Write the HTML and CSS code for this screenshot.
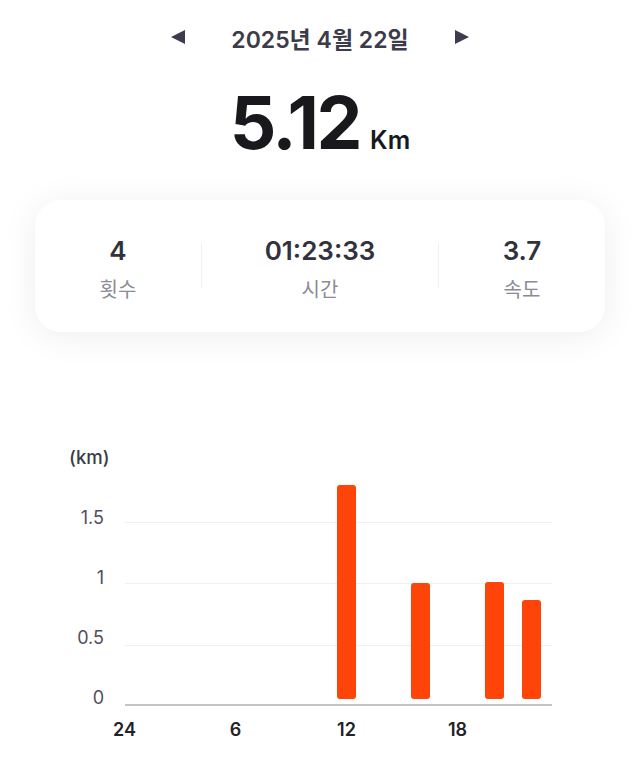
FILE: index.html
```html
<!DOCTYPE html>
<html lang="ko">
<head>
    <meta charset="UTF-8">
    <meta name="viewport" content="width=device-width, initial-scale=1.0">
    <title>걷기 기록</title>
    <link rel="stylesheet" href="styles.css">
</head>
<body>
    <!-- Date navigation -->
    <div class="date-nav">
        <span class="arrow arrow-left"></span>
        <span class="date">2025년 4월 22일</span>
        <span class="arrow arrow-right"></span>
    </div>

    <!-- Total distance -->
    <div class="total">
        <span class="total-value">5.12</span>
        <span class="total-unit">Km</span>
    </div>

    <!-- Summary card -->
    <div class="summary">
        <div class="stat">
            <div class="stat-value">4</div>
            <div class="stat-label">횟수</div>
        </div>
        <div class="divider"></div>
        <div class="stat">
            <div class="stat-value">01:23:33</div>
            <div class="stat-label">시간</div>
        </div>
        <div class="divider"></div>
        <div class="stat">
            <div class="stat-value">3.7</div>
            <div class="stat-label">속도</div>
        </div>
    </div>

    <!-- Hourly chart -->
    <div class="chart">
        <div class="chart-unit">(km)</div>
        <div class="chart-body">
            <div class="y-axis">
                <span>1.5</span>
                <span>1</span>
                <span>0.5</span>
                <span>0</span>
            </div>
            <div class="plot">
                <div class="bars">
                    <div class="bar" style="grid-column: 13; height: 214px"></div>
                    <div class="bar" style="grid-column: 17; height: 116px"></div>
                    <div class="bar" style="grid-column: 21; height: 117px"></div>
                    <div class="bar" style="grid-column: 23; height: 99px"></div>
                </div>
            </div>
        </div>
        <div class="x-axis">
            <span>24</span>
            <span>6</span>
            <span>12</span>
            <span>18</span>
        </div>
    </div>
</body>
</html>
```

FILE: styles.css
```css
body {
    margin: 0;
    background-color: #ffffff;
    font-family: Inter, "Noto Sans CJK KR", sans-serif;
    color: #33333d;
}

/* Date navigation */
.date-nav {
    display: flex;
    align-items: center;
    justify-content: center;
    margin-top: 22px;
    height: 32px;
}
.date {
    font-size: 23px;
    font-weight: 600;
    color: #3b3b4a;
    margin: 0 46px 0 46px;
}
.arrow {
    width: 0;
    height: 0;
    margin-top: -3px;
    border-top: 7.5px solid transparent;
    border-bottom: 7.5px solid transparent;
}
.arrow-left {
    border-right: 14px solid #3c3b52;
}
.arrow-right {
    border-left: 14px solid #3c3b52;
}

/* Total distance */
.total {
    display: flex;
    align-items: baseline;
    justify-content: center;
    margin-top: 32px;
    color: #18181d;
}
.total-value {
    font-size: 73px;
    font-weight: 700;
    line-height: 1;
    letter-spacing: -2.5px;
}
.total-unit {
    font-size: 25px;
    font-weight: 600;
    margin-left: 10px;
}

/* Summary card */
.summary {
    display: grid;
    grid-template-columns: 166px 1px 236px 1px 166px;
    align-items: center;
    margin: 0 35px;
    height: 132px;
    margin-top: 41px;
    padding-top: 6px;
    box-sizing: border-box;
    background-color: #ffffff;
    border-radius: 26px;
    box-shadow: 0 4px 36px rgba(0, 0, 0, 0.07);
}
.stat {
    text-align: center;
}
.stat-value {
    font-size: 26px;
    font-weight: 600;
    color: #32323c;
    line-height: 30px;
}
.stat-label {
    font-size: 20px;
    color: #8b8b96;
    line-height: 26px;
    margin-top: 11px;
}
.divider {
    height: 44px;
    margin-top: -6px;
    background-color: #efeff1;
}

/* Chart */
.chart {
    margin-top: 114px;
}
.chart-unit {
    padding-left: 69px;
    font-size: 18.5px;
    font-weight: 500;
    color: #3a3a48;
    line-height: 22px;
}
.chart-body {
    display: flex;
    height: 245px;
    margin-top: -7px;
}
.y-axis {
    width: 104px;
    display: flex;
    flex-direction: column;
    align-items: flex-end;
    gap: 40px;
    padding-top: 47px;
    box-sizing: border-box;
    font-size: 18px;
    color: #4f4f5c;
}
.y-axis span {
    line-height: 20px;
}
.plot {
    margin-left: 21px;
    width: 427px;
    height: 245px;
    box-sizing: border-box;
    border-bottom: 2px solid #c4c4c8;
    background-image:
        linear-gradient(#f0f0f2, #f0f0f2),
        linear-gradient(#f0f0f2, #f0f0f2),
        linear-gradient(#f0f0f2, #f0f0f2);
    background-size: 100% 1px;
    background-repeat: no-repeat;
    background-position: 0 61px, 0 122px, 0 184px;
}
.bars {
    display: grid;
    grid-template-columns: repeat(24, 18.5px);
    align-items: end;
    height: 238px;
    margin-left: -10px;
}
.bar {
    grid-row: 1;
    background-color: #ff4409;
    border-radius: 3px;
}
.x-axis {
    display: flex;
    padding-left: 69px;
    margin-top: 13px;
}
.x-axis span {
    width: 111px;
    text-align: center;
    font-size: 18px;
    font-weight: 600;
    color: #222228;
    line-height: 22px;
}
```
